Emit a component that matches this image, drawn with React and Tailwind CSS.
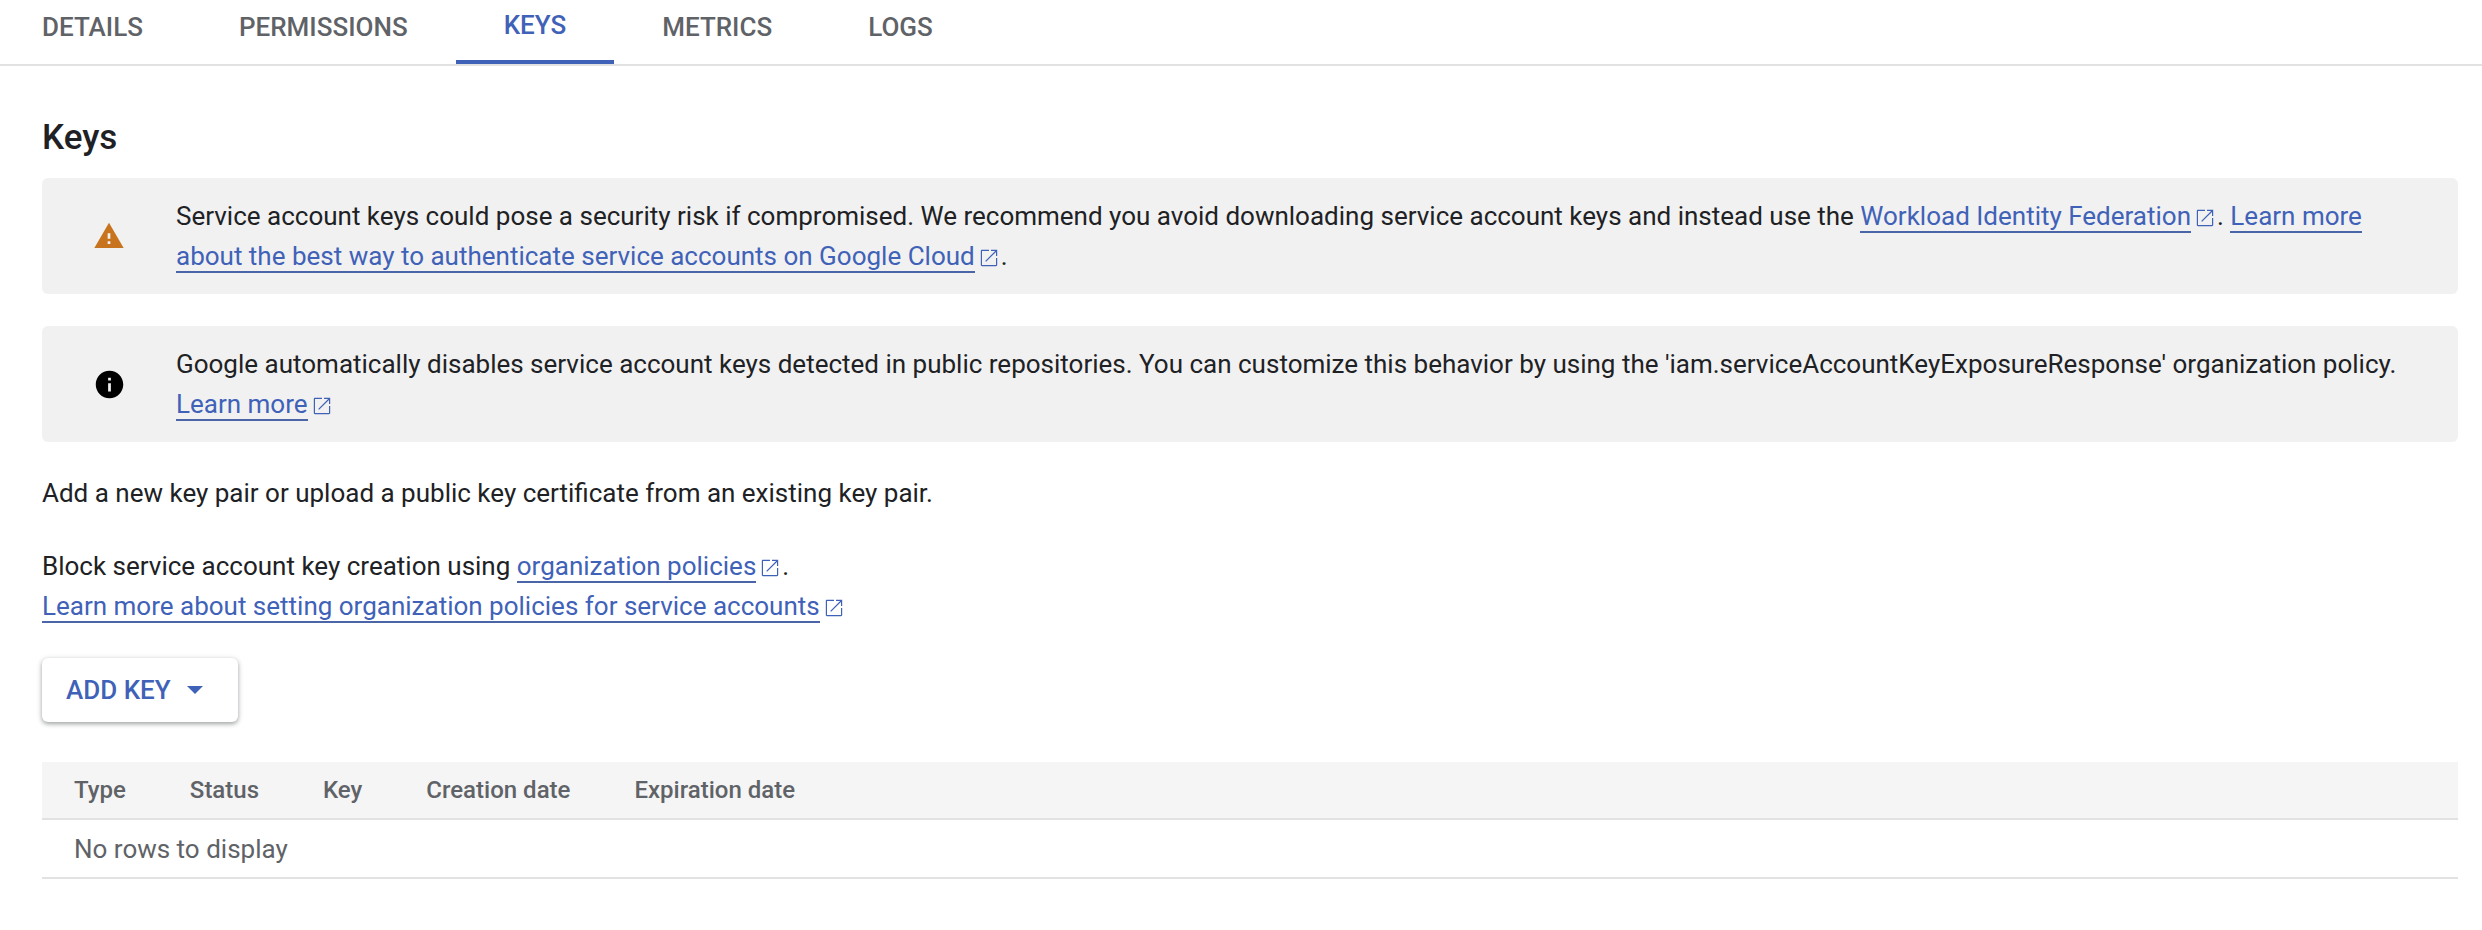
const tabs = ['DETAILS', 'PERMISSIONS', 'KEYS', 'METRICS', 'LOGS'];
const columns = ['Type', 'Status', 'Key', 'Creation date', 'Expiration date'];

function OpenIcon() {
  return (
    <svg viewBox="0 0 24 24" fill="#3f62b8" className="inline-block w-[24px] h-[24px] ml-[2px] align-[-5px]">
      <path d="M19 19H5V5h7V3.8H5c-.7 0-1.2.5-1.2 1.2v14c0 .7.5 1.2 1.2 1.2h14c.7 0 1.2-.5 1.2-1.2v-7H19v7zM14 3.8V5h4.1L8.2 14.9l.9.9L19 5.9V10h1.2V3.8H14z" />
    </svg>
  );
}

function DocLink({ children, icon = true }) {
  return (
    <>
      <a className="text-[#3f62b8] border-b-2 border-[#4a66a8]">{children}</a>
      {icon && <OpenIcon />}
    </>
  );
}

function Banner({ icon, children }) {
  return (
    <div className="flex items-center h-[116px] bg-[#f1f1f1] rounded-[6px]">
      <div className="w-[134px] shrink-0 flex justify-center">{icon}</div>
      <p className="pr-[32px] text-[#202124]">{children}</p>
    </div>
  );
}

export default function App() {
  return (
    <div className="h-[930px] bg-white font-['Roboto',sans-serif] text-[26px] leading-[40px] text-[#202124] overflow-hidden">
      {/* Tabs */}
      <div className="flex h-[66px] pl-[42px] border-b-2 border-[#e2e2e2]">
        {tabs.map((tab, i) => (
          <div
            key={tab}
            className={`flex items-center h-[64px] pb-[10px] font-medium leading-none ${i === 0 ? 'pr-[48px]' : 'px-[48px]'} ${tab === 'KEYS' ? 'text-[#3f62b8] border-b-[4px] border-[#3f62b8]' : 'text-[#5f6368]'}`}
          >
            {tab}
          </div>
        ))}
      </div>

      <div className="pl-[42px] pr-[24px]">
        <h1 className="h-[112px] pt-[52px] text-[35px] leading-[40px] font-medium text-[#202124]">Keys</h1>

        <div className="flex flex-col gap-[32px]">
          <Banner
            icon={
              <svg viewBox="0 0 24 24" fill="#c8741f" className="w-[32px] h-[32px]">
                <path d="M1 21h22L12 2 1 21zm12-3h-2v-2h2v2zm0-4h-2v-4h2v4z" />
              </svg>
            }
          >
            Service account keys could pose a security risk if compromised. We recommend you avoid downloading service account keys and instead use the{' '}
            <DocLink>Workload Identity Federation</DocLink>. <DocLink icon={false}>Learn more about the best way to authenticate service accounts on Google Cloud</DocLink><OpenIcon />.
          </Banner>
          <Banner
            icon={
              <svg viewBox="0 0 24 24" fill="#000000" className="w-[33px] h-[33px]">
                <path d="M12 2C6.48 2 2 6.48 2 12s4.48 10 10 10 10-4.48 10-10S17.52 2 12 2zm1 15h-2v-6h2v6zm0-8h-2V7h2v2z" />
              </svg>
            }
          >
            Google automatically disables service account keys detected in public repositories. You can customize this behavior by using the 'iam.serviceAccountKeyExposureResponse' organization policy.{' '}
            <DocLink>Learn more</DocLink>
          </Banner>
        </div>

        <p className="mt-[31px]">Add a new key pair or upload a public key certificate from an existing key pair.</p>
        <p className="mt-[33px]">
          Block service account key creation using <DocLink>organization policies</DocLink>.
        </p>
        <p>
          <DocLink>Learn more about setting organization policies for service accounts</DocLink>
        </p>

        <button className="flex items-center h-[64px] w-[196px] mt-[32px] pl-[24px] rounded-[6px] bg-white shadow-[0_2px_4px_rgba(60,64,67,0.4),0_1px_6px_rgba(60,64,67,0.15)] font-medium text-[#3f62b8]">
          ADD KEY
          <svg viewBox="0 0 10 5" fill="#3f62b8" className="w-[16px] h-[8px] ml-[16px]">
            <path d="M0 0h10L5 5z" />
          </svg>
        </button>

        <table className="w-full mt-[40px] border-collapse text-left">
          <thead>
            <tr className="h-[57px] bg-[#f5f5f5] border-b-2 border-[#e2e2e2]">
              {columns.map((c, i) => (
                <th key={c} className={`px-[32px] py-0 text-[24px] whitespace-nowrap font-medium text-[#5f6368] ${i === columns.length - 1 ? 'w-full' : ''}`}>
                  {c}
                </th>
              ))}
            </tr>
          </thead>
          <tbody>
            <tr className="h-[59px] border-b-2 border-[#e2e2e2]">
              <td colSpan={5} className="px-[32px] text-[#5f6368]">No rows to display</td>
            </tr>
          </tbody>
        </table>
      </div>
    </div>
  );
}
